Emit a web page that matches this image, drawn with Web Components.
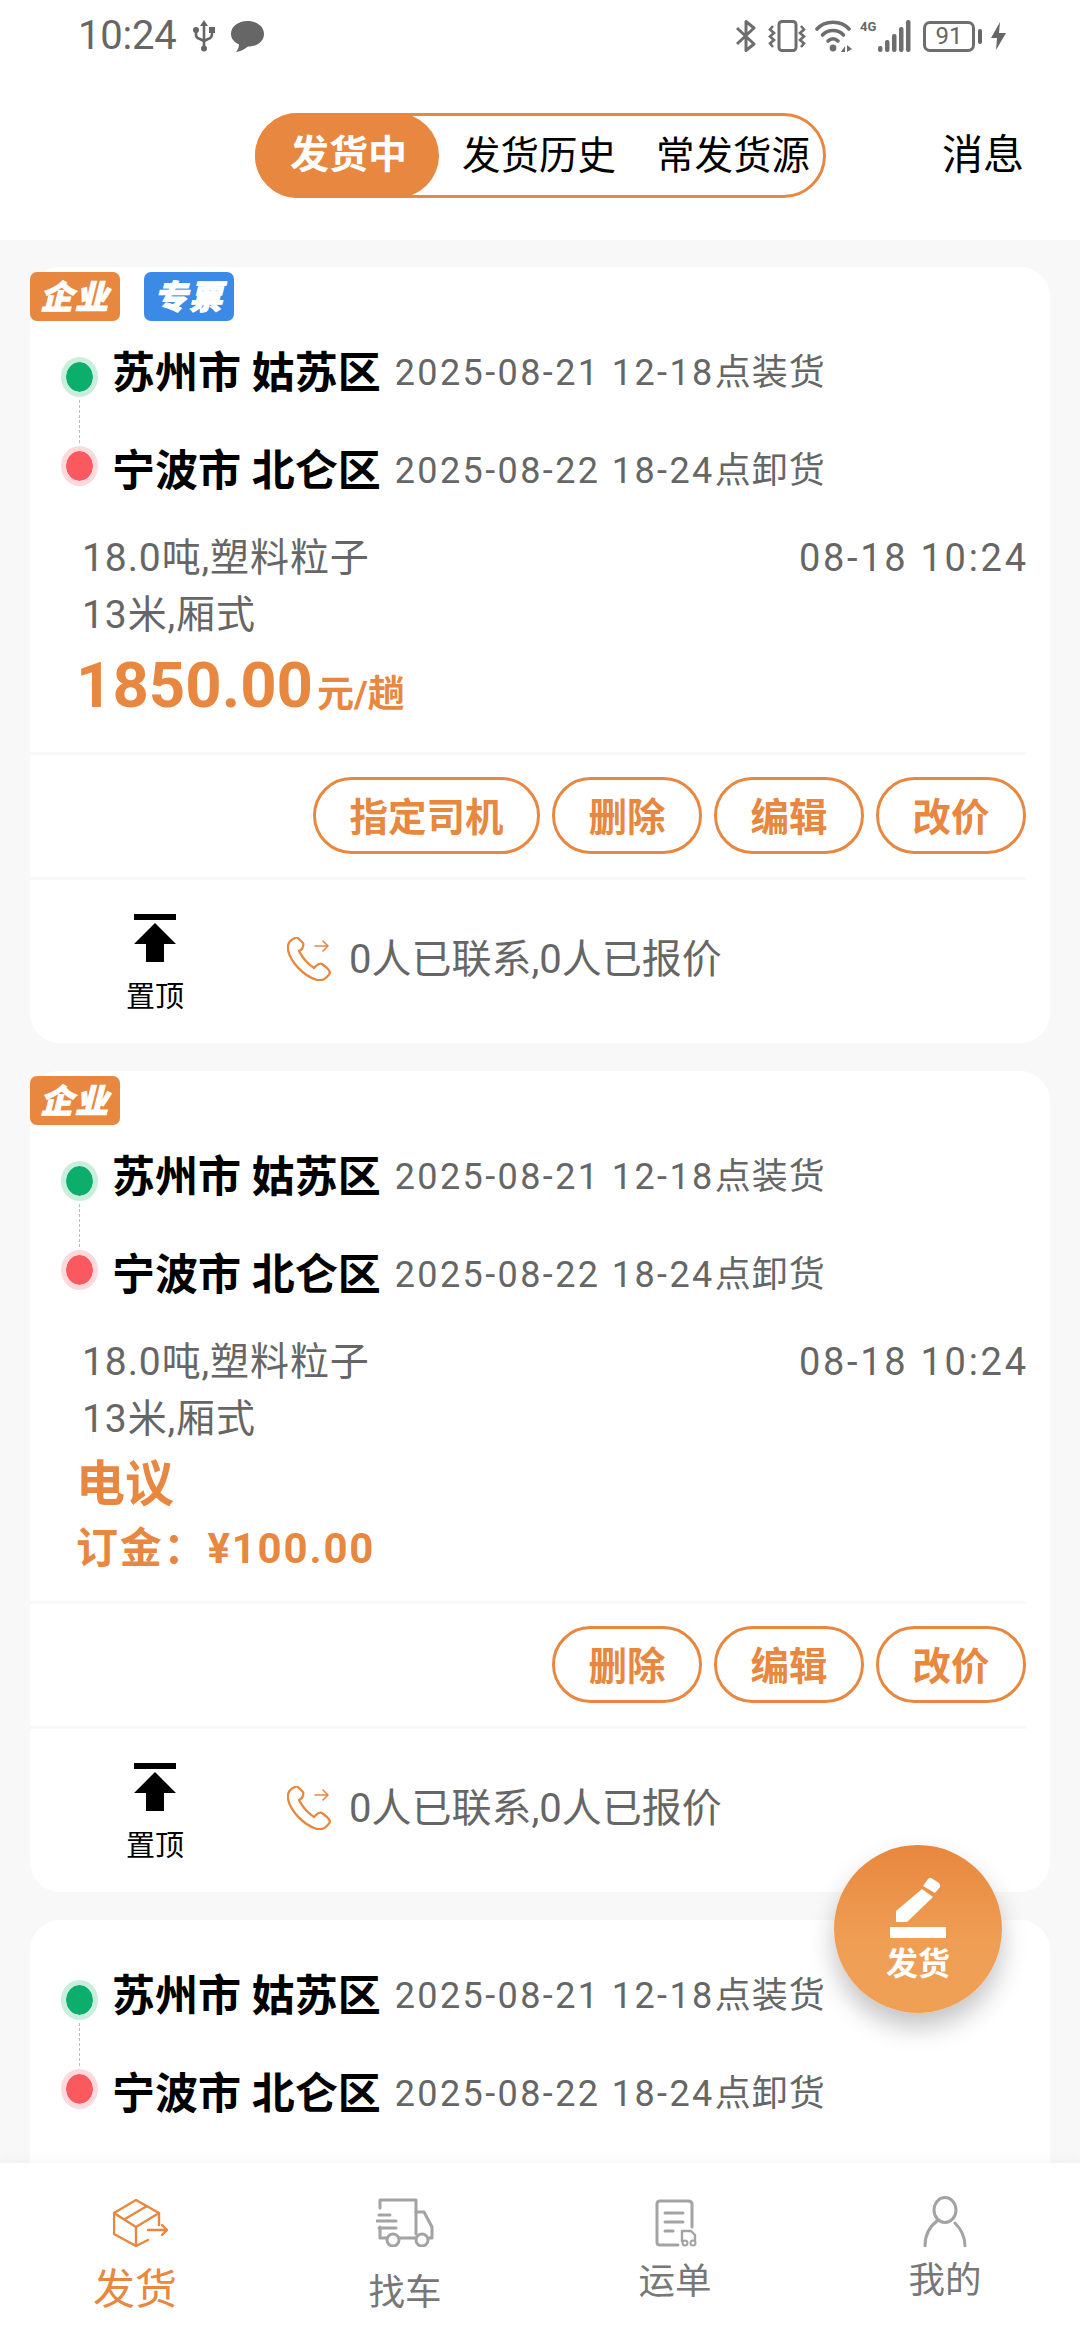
<!DOCTYPE html>
<html lang="zh">
<head>
<meta charset="utf-8">
<title>发货</title>
<style>
  html, body { margin: 0; padding: 0; background: #F8F8F8; }
  body { font-family: Roboto, "Noto Sans CJK SC", sans-serif; }
  .price-main { font-size: 63.5px; line-height: 84px; font-weight: 700; color: #E8873F; margin-left: -2px; }
  .price-unit { font-size: 37px; font-weight: 700; color: #E8873F; margin-left: 4px; }
  .price-talk { display: block; font-size: 49px; line-height: 74px; font-weight: 700; color: #E8873F; margin-left: -2px; }
  .price-deposit { display: block; font-size: 42px; line-height: 53px; font-weight: 700; letter-spacing: 1.8px; color: #E8873F; margin: 0 0 2px -2px; }
</style>
</head>
<body>
<app-shell>
  <status-bar slot="top"></status-bar>
  <ship-header slot="top"></ship-header>

  <freight-card>
    <tag-chip slot="tags">企业</tag-chip>
    <tag-chip slot="tags" color="#3A8AE6">专票</tag-chip>
    <route-line slot="route" from="苏州市 姑苏区" from-time="2025-08-21 12-18" from-note="点装货" to="宁波市 北仑区" to-time="2025-08-22 18-24" to-note="点卸货"></route-line>
    <cargo-info slot="cargo" weight="18.0吨,塑料粒子" truck="13米,厢式" time="08-18 10:24"></cargo-info>
    <span slot="price"><span class="price-main">1850.00</span><span class="price-unit">元/趟</span></span>
    <act-btn slot="actions">指定司机</act-btn>
    <act-btn slot="actions">删除</act-btn>
    <act-btn slot="actions">编辑</act-btn>
    <act-btn slot="actions">改价</act-btn>
    <card-footer slot="footer">0人已联系,0人已报价</card-footer>
  </freight-card>

  <freight-card>
    <tag-chip slot="tags">企业</tag-chip>
    <route-line slot="route" from="苏州市 姑苏区" from-time="2025-08-21 12-18" from-note="点装货" to="宁波市 北仑区" to-time="2025-08-22 18-24" to-note="点卸货"></route-line>
    <cargo-info slot="cargo" weight="18.0吨,塑料粒子" truck="13米,厢式" time="08-18 10:24"></cargo-info>
    <span slot="price"><span class="price-talk">电议</span><span class="price-deposit">订金：¥100.00</span></span>
    <act-btn slot="actions">删除</act-btn>
    <act-btn slot="actions">编辑</act-btn>
    <act-btn slot="actions">改价</act-btn>
    <card-footer slot="footer">0人已联系,0人已报价</card-footer>
  </freight-card>

  <freight-card plain>
    <route-line slot="route" from="苏州市 姑苏区" from-time="2025-08-21 12-18" from-note="点装货" to="宁波市 北仑区" to-time="2025-08-22 18-24" to-note="点卸货"></route-line>
    <cargo-info slot="cargo" style="margin-top:44px" weight="18.0吨,塑料粒子" truck="13米,厢式" time="08-18 10:24"></cargo-info>
  </freight-card>

  <send-fab slot="overlay"></send-fab>

  <tab-bar slot="bottom">
    <tab-item active style="--top:36px;--gap:21px;--size:42px">
      <svg slot="icon" style="margin-left:11px" width="56" height="48" viewBox="0 0 56 48" fill="none" stroke="#E8873F" stroke-width="2.4" stroke-linejoin="round" stroke-linecap="round">
        <path d="M23 1 L46 14 L23 28 L1 14 Z"/>
        <path d="M1 14 V35 L23 47 L35 41"/>
        <path d="M23 28 V47"/>
        <path d="M46 14 V26"/>
        <path d="M12 20 L34 7"/>
        <path d="M35 31 H54 M49 26 L54 31 L49 36"/>
      </svg>
      发货
    </tab-item>
    <tab-item style="--top:34px;--gap:24px;--size:36.5px">
      <svg slot="icon" width="58" height="50" viewBox="0 0 58 50" fill="none" stroke="#A3A3A3" stroke-width="3" stroke-linejoin="round" stroke-linecap="round">
        <path d="M4 11 V3 H40 V37"/>
        <path d="M4 30 V41 H11 M23 41 H40"/>
        <path d="M40 15 H48 L56 30 V41 H52"/>
        <circle cx="17" cy="43" r="6"/>
        <circle cx="46" cy="43" r="6"/>
        <path d="M3 18 H14 M1 24 H20 M3 31 H20"/>
      </svg>
      找车
    </tab-item>
    <tab-item style="--top:36px;--gap:13px;--size:36.5px">
      <svg slot="icon" style="margin-left:2px" width="42" height="48" viewBox="0 0 42 48" fill="none" stroke="#A3A3A3" stroke-width="3" stroke-linejoin="round" stroke-linecap="round">
        <path d="M23 46 H5 Q2 46 2 43 V5 Q2 2 5 2 H33 Q37 2 37 5 V28"/>
        <path d="M10 14 H28 M10 23 H28 M10 32 H18"/>
        <path d="M27 42 V32 H36 L40 36 V42" stroke-width="2.4"/>
        <circle cx="30" cy="44" r="2.5" stroke-width="2"/>
        <circle cx="38" cy="44" r="2.5" stroke-width="2"/>
      </svg>
      运单
    </tab-item>
    <tab-item style="--top:33px;--gap:12px;--size:36.5px">
      <svg slot="icon" width="44" height="51" viewBox="0 0 44 51" fill="none" stroke="#A3A3A3" stroke-width="3" stroke-linecap="round">
        <ellipse cx="22" cy="14" rx="11" ry="12.5"/>
        <path d="M14 25 C6 31 2 40 2 50"/>
        <path d="M32 27 C38 33 42 41 42 50"/>
      </svg>
      我的
    </tab-item>
  </tab-bar>
</app-shell>

<script>
const appShellTemplate = document.createElement('template');
appShellTemplate.innerHTML = `
<style>
  :host { display: flex; flex-direction: column; position: relative; width: 1080px; height: 2340px; overflow: hidden; background: #F8F8F8; }
  .list { flex: 1 1 0; min-height: 0; overflow: hidden; display: flex; flex-direction: column; gap: 28px; padding: 27px 30px 0; }
</style>
<slot name="top"></slot>
<div class="list"><slot></slot></div>
<slot name="bottom"></slot>
<slot name="overlay"></slot>
`;

class AppShell extends HTMLElement {
  connectedCallback() {
    if (!this.shadowRoot) {
      this.attachShadow({ mode: 'open' }).appendChild(appShellTemplate.content.cloneNode(true));
    }
  }
}
customElements.define('app-shell', AppShell);

const statusBarTemplate = document.createElement('template');
statusBarTemplate.innerHTML = `
<style>
  :host { display: flex; align-items: center; justify-content: space-between; box-sizing: border-box; height: 72px; padding: 0 74px 0 78px; background: #fff; color: #666; font-family: Roboto, sans-serif; }
  .left, .right { display: flex; align-items: center; }
  .time { font-size: 40px; line-height: 72px; letter-spacing: -0.2px; margin-right: 16px; }
  svg { display: block; flex: none; }
  .chat { margin-left: 16px; }
  .four-g { flex: none; width: 18px; margin: 0 0 0 7px; align-self: flex-start; font-size: 13px; font-weight: 700; line-height: 14px; }
  .battery { box-sizing: border-box; width: 52px; height: 31px; margin-left: 12px; border: 3px solid #6e6e6e; border-radius: 7px; font-size: 24px; line-height: 25px; text-align: center; color: #666; }
  .nub { width: 4px; height: 15px; margin-left: 3px; border-radius: 2px; background: #666; }
</style>
<div class="left">
  <span class="time">10:24</span>
  <svg width="22" height="32" viewBox="0 0 22 32" fill="none" stroke="#666" stroke-width="2.6">
    <path d="M11 5 V30"/>
    <path d="M11 0 L15 6 H7 Z" fill="#666" stroke="none"/>
    <circle cx="11" cy="28.5" r="3" fill="#666" stroke="none"/>
    <path d="M3 11 V15 Q3 18 7 19 L11 21"/>
    <path d="M19 11 V14 Q19 18 15 19 L11 21"/>
    <circle cx="3" cy="10" r="3" fill="#666" stroke="none"/>
    <rect x="16" y="7" width="6" height="6" fill="#666" stroke="none"/>
  </svg>
  <svg class="chat" width="33" height="31" viewBox="0 0 33 31">
    <path d="M16.5 0 C26 0 33 5.5 33 13 C33 20.500 26 25.500 17 25.500 C14 28 10 30.500 5 31 C7 28.500 8 26 8 23.500 C3 21 0 17.500 0 13 C0 5.500 7 0 16.500 0 Z" fill="#666"/>
  </svg>
</div>
<div class="right">
  <svg width="22" height="32" viewBox="0 0 22 32" fill="none" stroke="#6e6e6e" stroke-width="3" stroke-linejoin="round">
    <path d="M2 8 L19 24 L11 30.500 V1.500 L19 8 L2 24"/>
  </svg>
  <svg style="margin-left:11px" width="38" height="32" viewBox="0 0 38 32" fill="none" stroke="#6e6e6e" stroke-width="2.600">
    <rect x="11" y="1.500" width="17" height="29" rx="3" stroke-width="3"/>
    <path d="M5 6 L2 9.500 L6 13 L2 16.500 L6 20 L2 23.500 L5 27"/>
    <path d="M33 6 L36 9.500 L32 13 L36 16.500 L32 20 L36 23.500 L33 27"/>
  </svg>
  <svg style="margin-left:9px" width="38" height="32" viewBox="0 0 38 32" fill="none" stroke="#6e6e6e" stroke-width="3.600" stroke-linecap="round">
    <path d="M2 9 C10 0 26 0 34 9"/>
    <path d="M7.500 15 C13 9 23 9 28.500 15"/>
    <path d="M13 21 C16 18 20 18 23 21"/>
    <circle cx="18" cy="28" r="3.400" fill="#6e6e6e" stroke="none"/>
    <path d="M26 32 L30 26 V32 Z M32 25 L37 29 L32 32 Z" fill="#6e6e6e" stroke="none"/>
  </svg>
  <span class="four-g">4G</span>
  <svg width="33" height="32" viewBox="0 0 33 32" fill="#6e6e6e">
    <rect x="0" y="26" width="4.500" height="6" rx="2"/>
    <rect x="7" y="20" width="4.500" height="12" rx="2"/>
    <rect x="14" y="14" width="4.500" height="18" rx="2"/>
    <rect x="21" y="7" width="4.500" height="25" rx="2"/>
    <rect x="28" y="0" width="4.500" height="32" rx="2"/>
  </svg>
  <span class="battery">91</span>
  <span class="nub"></span>
  <svg style="margin-left:9px" width="15" height="28" viewBox="0 0 15 28">
    <path d="M9 0 L0 16 H6 L5 28 L15 11 H8 Z" fill="#666"/>
  </svg>
</div>
`;

class StatusBar extends HTMLElement {
  connectedCallback() {
    if (!this.shadowRoot) {
      this.attachShadow({ mode: 'open' }).appendChild(statusBarTemplate.content.cloneNode(true));
    }
  }
}
customElements.define('status-bar', StatusBar);

const shipHeaderTemplate = document.createElement('template');
shipHeaderTemplate.innerHTML = `
<style>
  :host { display: flex; align-items: flex-start; box-sizing: border-box; height: 168px; padding: 41px 0 0 255px; background: #fff; font-family: Roboto, "Noto Sans CJK SC", sans-serif; color: #000; }
  .seg { box-sizing: border-box; display: flex; align-items: center; width: 571px; height: 85px; border: 3px solid #E8873F; border-radius: 43px; font-size: 38.500px; }
  .on { box-sizing: border-box; width: 184px; height: 85px; margin: 0 0 0 -3px; padding-left: 35px; flex: none; border-radius: 43px; background: #E8873F; color: #fff; font-weight: 700; font-size: 39px; line-height: 85px; }
  .tab { line-height: 79px; font-weight: 400; }
  .tab.a { margin-left: 23px; }
  .tab.b { margin-left: 40px; }
  .msg { margin-left: 116px; font-size: 41px; line-height: 85px; }
</style>
<div class="seg">
  <span class="on">发货中</span>
  <span class="tab a">发货历史</span>
  <span class="tab b">常发货源</span>
</div>
<span class="msg">消息</span>
`;

class ShipHeader extends HTMLElement {
  connectedCallback() {
    if (!this.shadowRoot) {
      this.attachShadow({ mode: 'open' }).appendChild(shipHeaderTemplate.content.cloneNode(true));
    }
  }
}
customElements.define('ship-header', ShipHeader);

const freightCardTemplate = document.createElement('template');
freightCardTemplate.innerHTML = `
<style>
  :host { display: block; flex: none; box-sizing: border-box; background: #fff; border-radius: 30px; padding-top: 5px; }
  :host([plain]) { padding-top: 48px; }
  :host([plain]) .tags { display: none; }
  .tags { display: flex; gap: 24px; height: 49px; margin-bottom: 24px; }
  .price { padding: 0 0 24px 48px; }
  .line { height: 3px; margin-right: 24px; background: #F8F8F8; }
  .actions { display: flex; justify-content: flex-end; gap: 12px; margin-right: 24px; padding: 22px 0 23px; }
</style>
<div class="tags"><slot name="tags"></slot></div>
<slot name="route"></slot>
<slot name="cargo"></slot>
<div class="price"><slot name="price"></slot></div>
<div class="line"></div>
<div class="actions"><slot name="actions"></slot></div>
<div class="line"></div>
<slot name="footer"></slot>
`;

class FreightCard extends HTMLElement {
  connectedCallback() {
    if (!this.shadowRoot) {
      this.attachShadow({ mode: 'open' }).appendChild(freightCardTemplate.content.cloneNode(true));
    }
  }
}
customElements.define('freight-card', FreightCard);

const tagChipTemplate = document.createElement('template');
tagChipTemplate.innerHTML = `
<style>
  :host { display: block; width: 90px; height: 49px; border-radius: 7px; background: var(--chip, #E8873F); color: #fff; font-family: "Noto Sans CJK SC", sans-serif; font-size: 33px; font-weight: 900; font-style: italic; line-height: 47px; text-align: center; letter-spacing: 2px; -webkit-text-stroke: 1px #fff; }
</style>
<slot></slot>
`;

class TagChip extends HTMLElement {
  connectedCallback() {
    if (!this.shadowRoot) {
      this.attachShadow({ mode: 'open' }).appendChild(tagChipTemplate.content.cloneNode(true));
      const color = this.getAttribute('color');
      if (color) this.style.setProperty('--chip', color);
    }
  }
}
customElements.define('tag-chip', TagChip);

const routeLineTemplate = document.createElement('template');
routeLineTemplate.innerHTML = `
<style>
  :host { display: flex; margin-top: -4px; padding-left: 31px; font-family: Roboto, "Noto Sans CJK SC", sans-serif; }
  .rail { display: flex; flex-direction: column; align-items: center; width: 37px; flex: none; margin: 16px 14px 0 0; }
  .dot { box-sizing: border-box; width: 37px; height: 40px; border-radius: 50%; border: 5px solid #C9EEDD; background: #0BAF6B; background-clip: padding-box; }
  .dot.end { border-color: #FDD9DC; background-color: #FA5A5F; }
  .dash { width: 0; height: 43px; margin: 3px 0; border-left: 1px dashed #BDBDBD; }
  .stops { display: flex; flex-direction: column; gap: 42px; }
  .stop { display: flex; align-items: center; height: 56px; white-space: nowrap; }
  .city { font-size: 43px; font-weight: 700; color: #000; }
  .when { margin-left: 14px; font-size: 36px; letter-spacing: 2.4px; color: #666; }
  .note { letter-spacing: 1px; }
</style>
<div class="rail">
  <div class="dot"></div>
  <div class="dash"></div>
  <div class="dot end"></div>
</div>
<div class="stops">
  <div class="stop"><span class="city from"></span><span class="when"><span class="from-time"></span><span class="note from-note"></span></span></div>
  <div class="stop"><span class="city to"></span><span class="when"><span class="to-time"></span><span class="note to-note"></span></span></div>
</div>
`;

class RouteLine extends HTMLElement {
  connectedCallback() {
    if (!this.shadowRoot) {
      const root = this.attachShadow({ mode: 'open' });
      root.appendChild(routeLineTemplate.content.cloneNode(true));
      for (const name of ['from', 'from-time', 'from-note', 'to', 'to-time', 'to-note']) {
        root.querySelector('.' + name).textContent = this.getAttribute(name) || '';
      }
    }
  }
}
customElements.define('route-line', RouteLine);

const cargoInfoTemplate = document.createElement('template');
cargoInfoTemplate.innerHTML = `
<style>
  :host { display: block; margin-top: 35px; padding: 0 24px 0 52px; font-family: Roboto, "Noto Sans CJK SC", sans-serif; font-size: 39px; letter-spacing: 0.9px; line-height: 57px; color: #666; }
  .row { display: flex; justify-content: space-between; }
  .time { font-size: 38px; letter-spacing: 2.7px; margin-right: -2.7px; }
</style>
<div class="row"><span class="weight"></span><span class="time"></span></div>
<div class="truck"></div>
`;

class CargoInfo extends HTMLElement {
  connectedCallback() {
    if (!this.shadowRoot) {
      const root = this.attachShadow({ mode: 'open' });
      root.appendChild(cargoInfoTemplate.content.cloneNode(true));
      root.querySelector('.weight').textContent = this.getAttribute('weight') || '';
      root.querySelector('.truck').textContent = this.getAttribute('truck') || '';
      root.querySelector('.time').textContent = this.getAttribute('time') || '';
    }
  }
}
customElements.define('cargo-info', CargoInfo);

const actBtnTemplate = document.createElement('template');
actBtnTemplate.innerHTML = `
<style>
  :host { display: block; box-sizing: border-box; height: 77px; padding: 0 33.500px; border: 3px solid #E8873F; border-radius: 39px; color: #E8873F; font-family: "Noto Sans CJK SC", sans-serif; font-size: 38.500px; font-weight: 700; line-height: 68px; }
</style>
<slot></slot>
`;

class ActBtn extends HTMLElement {
  connectedCallback() {
    if (!this.shadowRoot) {
      this.attachShadow({ mode: 'open' }).appendChild(actBtnTemplate.content.cloneNode(true));
    }
  }
}
customElements.define('act-btn', ActBtn);

const cardFooterTemplate = document.createElement('template');
cardFooterTemplate.innerHTML = `
<style>
  :host { display: flex; align-items: center; box-sizing: border-box; height: 163px; padding-left: 30px; font-family: Roboto, "Noto Sans CJK SC", sans-serif; color: #666; }
  .pin { display: flex; flex-direction: column; align-items: center; width: 190px; flex: none; padding-top: 4px; color: #000; font-size: 29px; line-height: 34px; }
  .pin svg { display: block; margin-bottom: 18px; }
  .phone { display: block; flex: none; margin: -6px 18px 0 37px; }
  .text { font-size: 40px; line-height: 50px; margin-top: -4px; }
</style>
<div class="pin">
  <svg width="42" height="48" viewBox="0 0 42 48" fill="#000">
    <rect x="0" y="0" width="42" height="6"/>
    <path d="M21 9 L42 30 H30 V48 H12 V30 H0 Z"/>
  </svg>
  置顶
</div>
<svg class="phone" width="44" height="44" viewBox="0 0 44 44" fill="none" stroke="#E8873F" stroke-width="2.300" stroke-linejoin="round" stroke-linecap="round">
  <path d="M8 1 C3 3 0 7 1 13 C3 24 16 39 30 43 C35 44 40 41 43 36 C43 34 42 33 40 31 L35 27 C33 26 31 27 29 29 L27 31 C21 27 15 20 12 14 L15 12 C16 10 17 8 16 6 L12 2 C11 1 9 0 8 1 Z"/>
  <path d="M28 9 H41 M36 4 L41 9 L36 14" stroke-width="1.600"/>
</svg>
<span class="text"><slot></slot></span>
`;

class CardFooter extends HTMLElement {
  connectedCallback() {
    if (!this.shadowRoot) {
      this.attachShadow({ mode: 'open' }).appendChild(cardFooterTemplate.content.cloneNode(true));
    }
  }
}
customElements.define('card-footer', CardFooter);

const sendFabTemplate = document.createElement('template');
sendFabTemplate.innerHTML = `
<style>
  :host { position: absolute; right: 78px; bottom: 327px; display: flex; flex-direction: column; align-items: center; box-sizing: border-box; width: 168px; height: 168px; padding-top: 32px; border-radius: 50%; background: linear-gradient(180deg, #E8873F 0%, #EF9F55 60%, #EFA055 100%); box-shadow: 0 14px 26px rgba(0, 0, 0, 0.24); color: #fff; font-family: "Noto Sans CJK SC", sans-serif; font-size: 32px; font-weight: 700; line-height: 40px; }
  svg { display: block; margin-bottom: 3px; }
</style>
<svg width="56" height="61" viewBox="0 0 56 61" fill="#fff">
  <path d="M6 34 L32 12 L43 20 L17 45 H6 Z"/>
  <path d="M33 9 L38 2 Q40 0 42 1.500 L49 6 Q51 8 50 10 L45 16 Z"/>
  <rect x="0" y="50" width="56" height="11"/>
</svg>
发货
`;

class SendFab extends HTMLElement {
  connectedCallback() {
    if (!this.shadowRoot) {
      this.attachShadow({ mode: 'open' }).appendChild(sendFabTemplate.content.cloneNode(true));
    }
  }
}
customElements.define('send-fab', SendFab);

const tabBarTemplate = document.createElement('template');
tabBarTemplate.innerHTML = `
<style>
  :host { display: flex; flex: none; position: relative; height: 177px; background: #fff; box-shadow: 0 -4px 12px rgba(0, 0, 0, 0.03); }
</style>
<slot></slot>
`;

class TabBar extends HTMLElement {
  connectedCallback() {
    if (!this.shadowRoot) {
      this.attachShadow({ mode: 'open' }).appendChild(tabBarTemplate.content.cloneNode(true));
    }
  }
}
customElements.define('tab-bar', TabBar);

const tabItemTemplate = document.createElement('template');
tabItemTemplate.innerHTML = `
<style>
  :host { display: flex; flex-direction: column; align-items: center; flex: 1 1 0; box-sizing: border-box; padding-top: var(--top, 36px); color: #777; font-family: Roboto, "Noto Sans CJK SC", sans-serif; font-size: var(--size, 40px); line-height: 44px; }
  :host([active]) { color: #E8873F; }
  .icon { display: block; margin-bottom: var(--gap, 12px); line-height: 0; }
</style>
<span class="icon"><slot name="icon"></slot></span>
<slot></slot>
`;

class TabItem extends HTMLElement {
  connectedCallback() {
    if (!this.shadowRoot) {
      this.attachShadow({ mode: 'open' }).appendChild(tabItemTemplate.content.cloneNode(true));
    }
  }
}
customElements.define('tab-item', TabItem);
</script>
</body>
</html>
